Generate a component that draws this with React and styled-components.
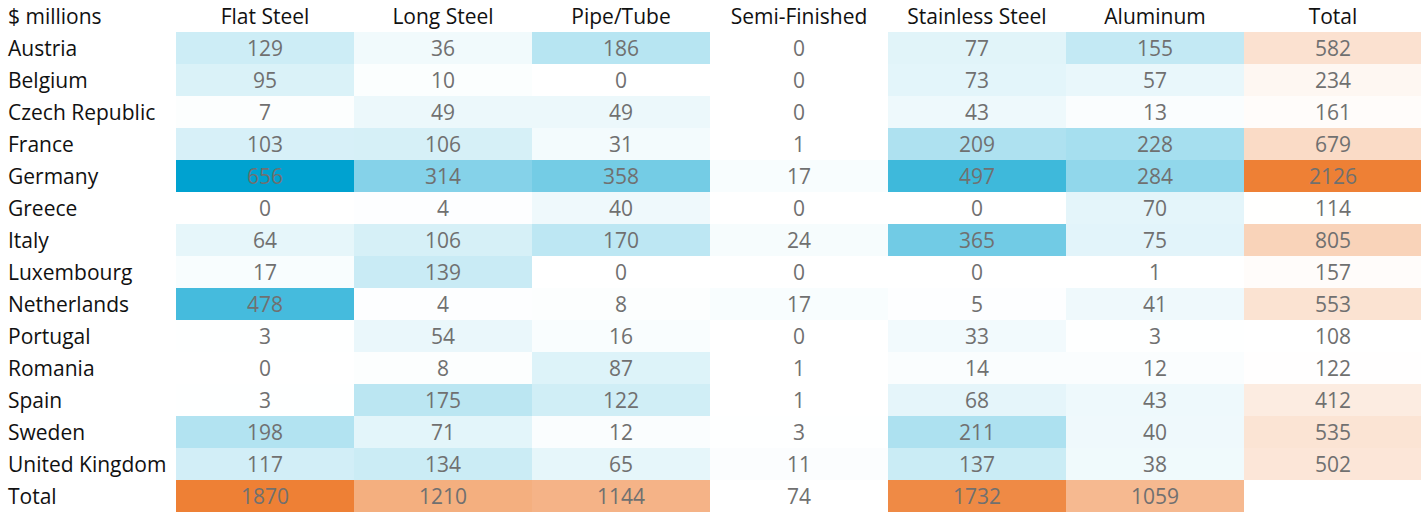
import React from 'react';
import styled, { createGlobalStyle } from 'styled-components';

const GlobalStyle = createGlobalStyle`
  body {
    margin: 0;
    background: #fff;
    font-family: "Open Sans", Lato, sans-serif;
  }
`;

const columns = ['Flat Steel', 'Long Steel', 'Pipe/Tube', 'Semi-Finished', 'Stainless Steel', 'Aluminum'];

const rows = [
  ['Austria', 129, 36, 186, 0, 77, 155, 582],
  ['Belgium', 95, 10, 0, 0, 73, 57, 234],
  ['Czech Republic', 7, 49, 49, 0, 43, 13, 161],
  ['France', 103, 106, 31, 1, 209, 228, 679],
  ['Germany', 656, 314, 358, 17, 497, 284, 2126],
  ['Greece', 0, 4, 40, 0, 0, 70, 114],
  ['Italy', 64, 106, 170, 24, 365, 75, 805],
  ['Luxembourg', 17, 139, 0, 0, 0, 1, 157],
  ['Netherlands', 478, 4, 8, 17, 5, 41, 553],
  ['Portugal', 3, 54, 16, 0, 33, 3, 108],
  ['Romania', 0, 8, 87, 1, 14, 12, 122],
  ['Spain', 3, 175, 122, 1, 68, 43, 412],
  ['Sweden', 198, 71, 12, 3, 211, 40, 535],
  ['United Kingdom', 117, 134, 65, 11, 137, 38, 502],
];

const totals = [1870, 1210, 1144, 74, 1732, 1059];

const BLUE = [0, 162, 208];
const ORANGE = [238, 128, 53];

// linear blend from white (at min) to the scale colour (at max)
function heat(value, min, max, rgb) {
  const t = Math.max(0, Math.min(1, (value - min) / (max - min)));
  const c = rgb.map((v) => Math.round(255 - (255 - v) * t));
  return `rgb(${c[0]}, ${c[1]}, ${c[2]})`;
}

const Table = styled.div`
  display: grid;
  grid-template-columns: 176px repeat(7, 178px);
  grid-auto-rows: 32px;
  width: 1421px;
`;

const HeadCell = styled.div`
  display: flex;
  align-items: center;
  justify-content: ${(p) => (p.$left ? 'flex-start' : 'center')};
  padding: ${(p) => (p.$left ? '0 0 0 8px' : '0')};
  font-size: 21px;
  color: #111;
  white-space: nowrap;
`;

const Label = styled.div`
  display: flex;
  align-items: center;
  padding-left: 8px;
  font-size: 21px;
  color: #111;
  white-space: nowrap;
`;

const Cell = styled.div`
  display: flex;
  align-items: center;
  justify-content: center;
  font-size: 21px;
  color: #707070;
  background: ${(p) => p.$bg || '#fff'};
`;

export default function App() {
  return (
    <>
      <GlobalStyle />
      <Table>
        <HeadCell $left>$ millions</HeadCell>
        {columns.map((c) => (
          <HeadCell key={c}>{c}</HeadCell>
        ))}
        <HeadCell>Total</HeadCell>

        {rows.map(([name, ...vals]) => (
          <React.Fragment key={name}>
            <Label>{name}</Label>
            {vals.slice(0, 6).map((v, i) => (
              <Cell key={i} $bg={heat(v, 0, 656, BLUE)}>{v}</Cell>
            ))}
            <Cell $bg={heat(vals[6], 108, 2126, ORANGE)}>{vals[6]}</Cell>
          </React.Fragment>
        ))}

        <Label>Total</Label>
        {totals.map((v, i) => (
          <Cell key={i} $bg={heat(v, 74, 1870, ORANGE)}>{v}</Cell>
        ))}
        <Cell />
      </Table>
    </>
  );
}
